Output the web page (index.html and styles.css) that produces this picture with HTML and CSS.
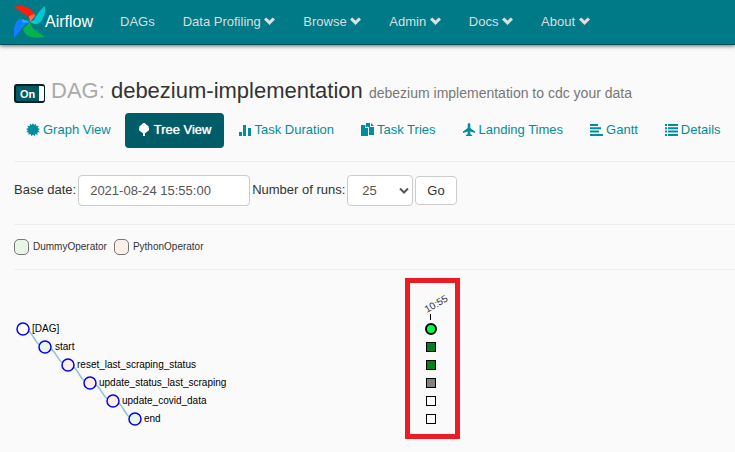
FILE: index.html
```html
<!DOCTYPE html>
<html lang="en">
<head>
<meta charset="utf-8">
<title>Airflow - DAG debezium-implementation</title>
<link rel="stylesheet" href="styles.css">
</head>
<body>
<svg class="defs" aria-hidden="true">
  <symbol id="chevron" viewBox="0 0 11 8"><path d="M0 2.600 2.200.4 5.500 3.600 8.800.4 11 2.600 5.500 8z"/></symbol>
</svg>
<header class="navbar">
  <a class="brand" href="#">
    <svg class="logo" viewBox="0 0 32 34" aria-hidden="true">
      <path fill="#ff1e0a" d="M0 1c4-.5 9-.5 13 1 4 2 7 5 8 8l-5 7-1-4C12 9 5 7 0 1z"/>
      <path fill="#ff6f61" d="M16 17l-1-6 5-2 1 2z"/>
      <path fill="#00c7d4" d="M31 1c.5 5 0 9-2 12-2 4-4 6-7 6l-6-2 4-2c2-4 5-9 11-14z"/>
      <path fill="#0fd0b8" d="M16 17l5-1 2 3-2 0z"/>
      <path fill="#04b34f" d="M31 32c-5 1-10 1-14 0-4-1-7-4-8-8l7-7 2 5c3 4 8 6 13 10z"/>
      <path fill="#0d7fff" d="M0 33c-1-5-1-9 1-13 1-4 4-6 7-6l8 3-4 2C8 22 6 27 0 33z"/>
      <path fill="#16b9f5" d="M16 17l-7 1-1-4z"/>
    </svg>
    <span>Airflow</span>
  </a>
  <nav class="menu">
    <a href="#">DAGs</a>
    <a href="#">Data Profiling <svg class="chev"><use href="#chevron"/></svg></a>
    <a href="#">Browse <svg class="chev"><use href="#chevron"/></svg></a>
    <a href="#">Admin <svg class="chev"><use href="#chevron"/></svg></a>
    <a href="#">Docs <svg class="chev"><use href="#chevron"/></svg></a>
    <a href="#">About <svg class="chev"><use href="#chevron"/></svg></a>
  </nav>
</header>
<main>
  <div class="heading">
    <label class="switch"><input type="checkbox" checked><span>On</span></label>
    <h1><span class="kind">DAG:</span> debezium-implementation <small>debezium implementation to cdc your data</small></h1>
  </div>
  <nav class="tabs">
    <a href="#"><svg viewBox="0 0 14 14"><path d="M7 0 8.100 2.100 10 .8 10.200 3.100 12.700 2.800 11.500 5 14 6 12.100 7.200 13.700 9.200 11.300 9.400 11.600 11.800 9.400 11 8.500 13.200 7 11.500 5.500 13.200 4.600 11 2.400 11.800 2.700 9.400.3 9.200 1.900 7.200 0 6 2.500 5 1.300 2.800 3.800 3.100 4 .8 5.900 2.100z"/></svg>Graph View</a>
    <a class="active" href="#" aria-current="page"><svg viewBox="0 0 14 14"><path d="M7 0c1.500 0 2.200 1 2.500 2 1.800.3 2.300 1.500 2.200 2.700 1 1.500.3 3.300-1.700 4.100L8 10.200V13H6v-2.800L4 8.800C2 8 1.300 6.200 2.300 4.700 2.200 3.500 2.700 2.300 4.500 2 4.800 1 5.500 0 7 0z"/></svg>Tree View</a>
    <a href="#"><svg viewBox="0 0 14 14"><path d="M1 9h3v4H1zM5 2h3v11H5zM10 5h3v8h-3z"/></svg>Task Duration</a>
    <a href="#"><svg viewBox="0 0 14 14"><path d="M1 2h4v3h3v8H1zM6 0h4v4h4v8H9V4.500L6 2zM11 0l3 3h-3zM5.600 1.500 8 4H5.600z"/></svg>Task Tries</a>
    <a href="#"><svg viewBox="0 0 14 14"><path d="M7 0c1 0 1.300 1 1.300 2v3L13 8.500V10L8.300 8.500v2.500l1.900 1.200V13H3.800v-.8L5.700 11V8.500L1 10V8.500L5.700 5V2C5.700 1 6 0 7 0z"/></svg>Landing Times</a>
    <a href="#"><svg viewBox="0 0 14 14"><path d="M1 1h8v2H1zM1 4.300h11v2H1zM1 7.600h9v2H1zM1 11h13v2H1z"/></svg>Gantt</a>
    <a href="#"><svg viewBox="0 0 14 14"><path d="M1 1h2v2H1zM4 1h10v2H4zM1 4.300h2v2H1zM4 4.300h10v2H4zM1 7.600h2v2H1zM4 7.600h10v2H4zM1 11h2v2H1zM4 11h10v2H4z"/></svg>Details</a>
  </nav>
  <form class="filters">
    <label for="base">Base date:</label>
    <input id="base" type="text" value="2021-08-24 15:55:00">
    <label for="runs">Number of runs:</label>
    <span class="picker">
      <select id="runs"><option>5</option><option selected>25</option><option>50</option></select>
      <svg class="arrow" viewBox="0 0 10 7" aria-hidden="true"><path d="M1 1.500 5 5.500 9 1.500"/></svg>
    </span>
    <button type="button">Go</button>
  </form>
  <ul class="legend">
    <li class="dummy">DummyOperator</li>
    <li class="python">PythonOperator</li>
  </ul>
  <svg class="tree" width="460" height="172" viewBox="0 0 460 172" role="img" aria-label="DAG run tree">
    <g class="links">
      <path d="M9 59C20 59 20 77 31 77M31 77C43 77 43 95 54 95M54 95C65 95 65 113 76 113M76 113C88 113 88 131 99 131M99 131C110 131 110 149 121 149"/>
    </g>
    <g class="nodes">
      <circle class="root" cx="9" cy="59" r="6"/>
      <circle class="dummy" cx="31" cy="77" r="6"/>
      <circle class="python" cx="54" cy="95" r="6"/>
      <circle class="python" cx="76" cy="113" r="6"/>
      <circle class="python" cx="99" cy="131" r="6"/>
      <circle class="dummy" cx="121" cy="149" r="6"/>
    </g>
    <g class="names">
      <text x="18" y="62">[DAG]</text>
      <text x="41" y="80">start</text>
      <text x="63" y="98">reset_last_scraping_status</text>
      <text x="85" y="116">update_status_last_scraping</text>
      <text x="108" y="134">update_covid_data</text>
      <text x="130" y="152">end</text>
    </g>
    <g class="runs">
      <text transform="translate(413 43) rotate(-30)">10:55</text>
      <path d="M416.500 44v6"/>
      <circle cx="417" cy="59" r="5"/>
      <rect class="success" x="412.500" y="72.500" width="9" height="9"/>
      <rect class="success" x="412.500" y="90.500" width="9" height="9"/>
      <rect class="running" x="412.500" y="108.500" width="9" height="9"/>
      <rect x="412.500" y="126.500" width="9" height="9"/>
      <rect x="412.500" y="144.500" width="9" height="9"/>
    </g>
    <rect class="mark" x="393.500" y="10.500" width="50" height="156"/>
  </svg>
</main>
</body>
</html>
```
FILE: styles.css
```css
* { box-sizing: border-box; }
body {
  margin: 0;
  background: #fafafa;
  color: #333;
  font: 13px/18px "Liberation Sans", Arial, sans-serif;
}
a { text-decoration: none; }
.defs { position: absolute; width: 0; height: 0; }

.navbar {
  display: flex;
  align-items: center;
  height: 45px;
  padding-left: 14px;
  background: #007a87;
  border-bottom: 1px solid #00505a;
  box-shadow: 0 1px 4px rgba(0, 0, 0, 0.6);
}
.brand {
  display: flex;
  align-items: center;
  color: #fff;
  font-size: 16px;
}
.logo { width: 32px; height: 34px; margin-right: -1px; }
.menu { display: flex; gap: 28px; margin-left: 27px; }
.menu a { color: #ddd; white-space: nowrap; }
.chev { width: 11px; height: 8px; fill: #ddd; margin-bottom: 1px; }

main { padding-left: 14px; }
.heading { display: flex; align-items: center; gap: 6px; padding-top: 33px; }
.switch {
  display: flex;
  width: 31px;
  height: 19px;
  margin-top: 3px;
  border: 2px solid #001f22;
  border-right-width: 1px;
  border-radius: 3px;
  background: linear-gradient(90deg, #005a63 23px, #fff 23px);
  color: #fff;
  font-size: 11px;
  font-weight: bold;
  line-height: 16px;
}
.switch input { appearance: none; width: 0; height: 0; margin: 0; }
.switch span { padding-left: 4px; }
h1 { margin: 0; font-size: 22px; font-weight: normal; line-height: 26px; white-space: nowrap; }
h1 small { color: #777; font-size: 14px; }
.kind { color: #aaa; }

.tabs {
  display: flex;
  gap: 2px;
  padding: 7px 0 13px;
  border-bottom: 1px solid #eee;
}
.tabs a {
  display: flex;
  align-items: center;
  gap: 3px;
  height: 35px;
  padding: 0 12px 2px;
  border-radius: 4px;
  color: #018d9b;
  white-space: nowrap;
}
.tabs svg { width: 14px; height: 14px; fill: currentColor; }
.tabs .active { background: #005c66; color: #fff; text-shadow: 0 0 1px #fff; }

.filters {
  display: flex;
  align-items: center;
  gap: 2px;
  padding: 13px 0 18px;
  border-bottom: 1px solid #eee;
}
.filters label { padding-bottom: 2px; }
.filters input, .filters select, .filters button {
  height: 31px;
  border: 1px solid #ccc;
  border-radius: 4px;
  background: #fff;
  color: #555;
  font: inherit;
}
.filters input { width: 172px; padding: 0 11px; }
.picker { position: relative; }
.filters select { display: block; width: 66px; padding: 0 14px; appearance: none; }
.arrow {
  position: absolute;
  top: 12px;
  right: 4px;
  width: 10px;
  height: 7px;
  fill: none;
  stroke: #555;
  stroke-width: 2;
  pointer-events: none;
}
.filters button { height: 29px; padding: 0 11px; color: #333; }

.legend {
  display: flex;
  gap: 7px;
  margin: 0;
  padding: 13px 0;
  border-bottom: 1px solid #eee;
  list-style: none;
  font-size: 10px;
}
.legend li { display: flex; align-items: center; gap: 4px; }
.legend li::before {
  content: "";
  width: 13px;
  height: 14px;
  border: 1px solid #777;
  border-radius: 5px;
}
.legend .dummy::before { background: #e8f7e4; }
.legend .python::before { background: #ffefeb; }

.tree { display: block; max-width: 100%; font-size: 10px; }
.links path { fill: none; stroke: #8fc1dc; stroke-width: 1.5; }
.nodes circle { stroke: #00f; stroke-width: 1.5; }
.nodes .root { fill: #fff; }
.nodes .dummy { fill: #e8f7e4; }
.nodes .python { fill: #ffefeb; }
.names text { fill: #000; }
.runs text { fill: #333; }
.runs path { stroke: #000; }
.runs circle { fill: #01ff3f; stroke: #000; stroke-width: 2; }
.runs rect { fill: #fff; stroke: #000; }
.runs .success { fill: #008018; }
.runs .running { fill: #808080; }
.tree .mark { fill: none; stroke: #ed1c24; stroke-width: 5; }
```
